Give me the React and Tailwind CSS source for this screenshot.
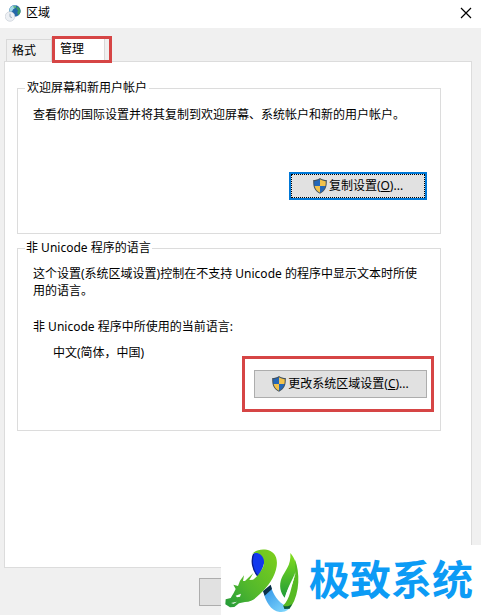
import { useState } from 'react'

function RegionIcon() {
  return (
    <svg viewBox="0 0 16 17" className="w-4 h-[17px]" aria-hidden="true">
      <circle cx="9.800" cy="5.900" r="5.800" fill="#2568a8" />
      <path d="M4.600 3.600C6 1 8.600 0 11 .5L9.600 3.200 8 4.400 7 6.400 4.200 6.800z" fill="#a5dbe8" />
      <path d="M12 1.400C14.500 2.600 16 5 15.400 7.600L13.600 10.400 12.200 8 13 5.400 11.400 3.600z" fill="#3c9a62" />
      <path d="M8 1.200l2.600-.4.600 1.400-2 1.400z" fill="#63b884" />
      <circle cx="5" cy="11.500" r="4.800" fill="#edf0f4" stroke="#c3cad2" strokeWidth=".6" />
      <path d="M5 8.600v3.200l2 .8" fill="none" stroke="#93a1b2" strokeWidth=".8" />
    </svg>
  )
}

function ShieldIcon() {
  return (
    <svg viewBox="0 0 14 16" className="w-[14px] h-4 shrink-0" aria-hidden="true">
      <path d="M7 0C5 1.500 2.600 2.100.2 2.100c-.2 6.400 1 10.900 6.800 13.700C12.800 13 14 8.500 13.800 2.100 11.400 2.100 9 1.500 7 0z" fill="#44525c" />
      <path d="M7 1.300C5.300 2.500 3.300 3.100 1.300 3.200 1.200 5 1.300 6.500 1.600 8H7z" fill="#2467b8" />
      <path d="M7 1.300C8.700 2.500 10.700 3.100 12.700 3.200 12.800 5 12.700 6.500 12.400 8H7z" fill="#f2c24c" />
      <path d="M1.600 8C2.300 11 4 13.200 7 14.700V8z" fill="#f2c24c" />
      <path d="M12.400 8C11.700 11 10 13.200 7 14.700V8z" fill="#2467b8" />
    </svg>
  )
}

function DragonLogo() {
  return (
    <svg viewBox="0 0 240 210" className="w-20 h-[70px] shrink-0" aria-hidden="true">
      <defs>
        <linearGradient id="body" x1="1" y1="0" x2="0" y2="1">
          <stop offset="0" stopColor="#7fd01c" />
          <stop offset=".6" stopColor="#52b82c" />
          <stop offset="1" stopColor="#239a3a" />
        </linearGradient>
        <linearGradient id="leaf" x1="0" y1="0" x2="0" y2="1">
          <stop offset="0" stopColor="#84de1c" />
          <stop offset="1" stopColor="#1f9c38" />
        </linearGradient>
        <linearGradient id="ribbon" x1="0" y1="0" x2="1" y2="1">
          <stop offset="0" stopColor="#2b8fe6" />
          <stop offset="1" stopColor="#8be0ff" />
        </linearGradient>
      </defs>
      <path d="M127 139L149 122C156 148 172 172 194 182L213 178C206 194 194 203 176 201C150 198 133 170 127 139z" fill="url(#ribbon)" />
      <path d="M126 138L149 119 153 132 131 152z" fill="#0a2f48" />
      <path d="M106 20C118 18 130 28 130 45C130 62 121 77 112 94C100 82 93 65 93 46C93 33 97 23 106 20z" fill="#1238ee" />
      <path d="M98 27C90 45 93 72 110 93" fill="none" stroke="#0a1c8c" strokeWidth="4" />
      <path d="M94 26C106 13 130 10 148 18C164 26 170 42 167 64C162 96 142 124 116 148C104 160 92 171 72 171L54 175 40 186 27 187 13 178 14 163 29 159 38 144 44 132 37 119 51 123 57 107 69 91 66 108 72 108 97 84 85 105 96 104C108 96 114 88 121 76C128 64 131 54 128 43C124 28 110 20 94 26z" fill="url(#body)" />
      <path d="M44 152L60 146 57 155 48 157z" fill="#fff" />
      <path d="M30 174L48 170 38 176z" fill="#fff" />
      <path d="M208 24C222 40 229 60 224 85C217 108 202 126 191 158C178 143 173 122 182 99C191 78 211 62 208 24z" fill="url(#leaf)" />
      <path d="M222 44C237 82 237 142 211 184C204 192 193 190 186 182C208 164 210 124 223 88z" fill="#57ba24" />
      <path d="M187 182C196 186 205 184 213 176L206 191 190 192z" fill="#0c5a3c" />
      <path d="M223 82C214 108 198 128 192 162C204 144 217 116 223 82z" fill="#fff" />
    </svg>
  )
}

const TABS = [
  { id: 'format', label: '格式' },
  { id: 'admin', label: '管理' },
]

export default function App() {
  const [tab, setTab] = useState('admin')

  return (
    <div className="relative min-h-screen flex flex-col overflow-hidden bg-[#f0f0f0] text-black text-[12px] leading-4 font-['Noto_Sans','Noto_Sans_CJK_SC',sans-serif]">
      <header className="flex items-center h-7 pl-[5px] pr-2 pb-[2px] bg-white">
        <RegionIcon />
        <h1 className="ml-[5px]">区域</h1>
        <button type="button" aria-label="关闭" className="ml-auto p-px">
          <svg viewBox="0 0 12 12" className="w-3 h-3" aria-hidden="true">
            <path d="M1 1l10 10M11 1L1 11" stroke="#000" strokeWidth="1.2" />
          </svg>
        </button>
      </header>

      <div role="tablist" className="flex items-end h-[33px] px-[6px]">
        {TABS.map((t) => (
          <button
            key={t.id}
            type="button"
            role="tab"
            aria-selected={tab === t.id}
            onClick={() => setTab(t.id)}
            className={
              tab === t.id
                ? 'relative z-10 w-[54px] h-[25px] -mb-px -ml-[2px] pl-2 pb-[2px] text-left bg-white border border-b-0 border-[#d9d9d9]'
                : 'w-[47px] h-[22px] pl-[5px] text-left border border-b-0 border-[#d9d9d9]'
            }
          >
            {t.label}
            {t.id === 'admin' && (
              <span className="absolute -top-[2px] left-0 w-[60px] h-[27px] border-3 border-[#d64545]" />
            )}
          </button>
        ))}
      </div>

      <main className="flex-1 ml-1 mr-[9px] pt-[18px] pl-3 pr-[30px] bg-white border border-[#dcdcdc]">
        <fieldset className="pl-[15px] pr-[13px] pb-[33px] border border-[#dcdcdc]">
          <legend className="-ml-2 px-[2px]">欢迎屏幕和新用户帐户</legend>
          <p className="pt-[11px]">查看你的国际设置并将其复制到欢迎屏幕、系统帐户和新的用户帐户。</p>
          <div className="flex justify-end mt-[49px]">
            <button
              type="button"
              className="w-[138px] h-7 border-2 border-[#0078d7] bg-[#e1e1e1]"
            >
              <span className="flex h-full items-center justify-center gap-[2px] border border-dotted border-black">
                <ShieldIcon />
                <span>复制设置(<u>O</u>)...</span>
              </span>
            </button>
          </div>
        </fieldset>

        <fieldset className="mt-[6px] pl-[15px] pr-[13px] pb-8 border border-[#dcdcdc]">
          <legend className="-ml-2 px-px">非 Unicode 程序的语言</legend>
          <p className="pt-[9px] leading-[17px]">
            这个设置(系统区域设置)控制在不支持 Unicode 的程序中显示文本时所使用的语言。
          </p>
          <p className="mt-5">非 Unicode 程序中所使用的当前语言:</p>
          <p className="mt-[10px] pl-5">中文(简体，中国)</p>
          <div className="flex justify-end mt-[9px]">
            <div className="relative">
              <button
                type="button"
                className="flex items-center justify-center gap-[2px] w-[173px] h-7 bg-[#e1e1e1] border border-[#adadad]"
              >
                <ShieldIcon />
                <span>更改系统区域设置(<u>C</u>)...</span>
              </button>
              <span className="absolute -top-[14px] -bottom-[14px] -left-3 -right-[7px] border-3 border-[#d64545] pointer-events-none" />
            </div>
          </div>
        </fieldset>
      </main>

      <footer className="h-[47px] pt-[10px] pl-[199px]">
        <button type="button" aria-label="确定" className="block w-[75px] h-7 bg-[#e1e1e1] border border-[#adadad]" />
      </footer>

      <div className="absolute right-0 bottom-0 z-20 flex items-center w-[260px] h-[70px] bg-white">
        <DragonLogo />
        <span className="ml-2 pb-[6px] whitespace-nowrap font-bold text-[41px] leading-[48px] text-[#0c9bf5] font-['Noto_Sans_CJK_SC',sans-serif]">
          极致系统
        </span>
      </div>
    </div>
  )
}
